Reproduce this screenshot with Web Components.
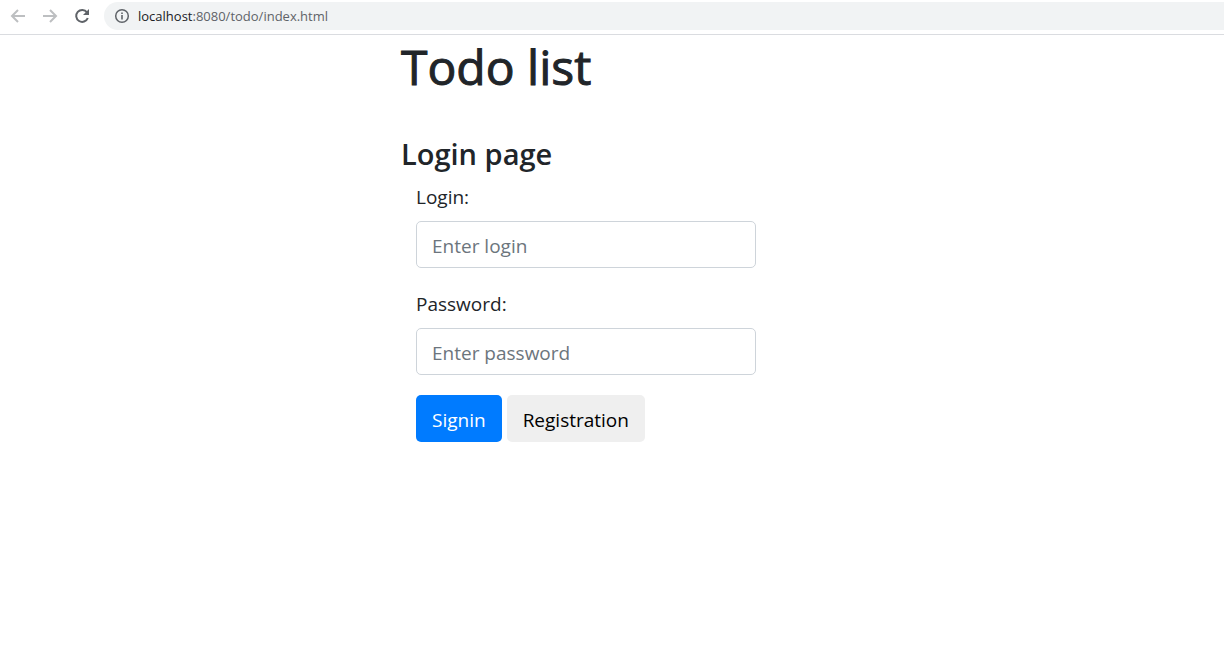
<!DOCTYPE html>
<html lang="en">
<head>
<meta charset="utf-8">
<meta name="viewport" content="width=device-width, initial-scale=1">
<title>Todo list</title>
<style>
  body { margin: 0; background: #fff; color: #212529; font: 400 19px/30px "Segoe UI", "Open Sans", "Noto Sans", sans-serif; }
</style>
</head>
<body>
<browser-bar host="localhost" path=":8080/todo/index.html"></browser-bar>
<todo-page heading="Todo list">
  <login-form heading="Login page">
    <text-field label="Login:" name="login" type="text" placeholder="Enter login"></text-field>
    <text-field label="Password:" name="password" type="password" placeholder="Enter password"></text-field>
    <push-button slot="actions" variant="primary">Signin</push-button>
    <push-button slot="actions">Registration</push-button>
  </login-form>
</todo-page>
<script>
class BaseElement extends HTMLElement {
  constructor() {
    super();
    this.attachShadow({ mode: 'open' });
  }
  connectedCallback() {
    this.shadowRoot.innerHTML = this.render();
  }
  attr(name) {
    return this.getAttribute(name) || '';
  }
}

customElements.define('browser-bar', class extends BaseElement {
  render() {
    return `
      <style>
        :host { display: flex; align-items: center; height: 32px; padding: 0 0 2px 8px; border-bottom: 1px solid #dadce0; background: #fff; }
        button { display: flex; width: 20px; height: 20px; margin-right: 12px; padding: 0; border: 0; background: none; color: #5f6368; }
        button:disabled { color: #bdbfc1; }
        svg { display: block; fill: none; stroke: currentColor; stroke-width: 2; }
        .address { flex: 1; display: flex; align-items: center; gap: 8px; height: 28px; padding-left: 10px; border-radius: 14px 0 0 14px; background: #f1f3f4; color: #5f6368; font-size: 13px; line-height: 20px; }
        .address svg { width: 16px; height: 16px; }
        .host { color: #202124; }
      </style>
      <button disabled aria-label="Back"><svg width="20" height="20" viewBox="0 0 20 20"><path d="M17 10H4.5M10 4L4 10L10 16"/></svg></button>
      <button disabled aria-label="Forward"><svg width="20" height="20" viewBox="0 0 20 20"><path d="M3 10H15.500M10 4L16 10L10 16"/></svg></button>
      <button aria-label="Reload"><svg width="20" height="20" viewBox="0 0 20 20"><path d="M15 6.300A6 6 0 1 0 15.800 12"/><path fill="currentColor" stroke="none" d="M17 3V9H11Z"/></svg></button>
      <div class="address">
        <svg viewBox="0 0 16 16" aria-hidden="true"><circle cx="8" cy="8" r="6.300" stroke-width="1.500"/><path stroke-width="1.600" d="M8 7V11.500M8 4.400V6"/></svg>
        <span><span class="host">${this.attr('host')}</span>${this.attr('path')}</span>
      </div>`;
  }
});

customElements.define('todo-page', class extends BaseElement {
  render() {
    return `
      <style>
        :host { display: grid; grid-template-columns: 401fr 370fr 453fr; }
        main { grid-column: 2; min-width: 0; }
        h1 { margin: 0 0 36px; font-size: 48px; line-height: 64px; font-weight: 500; white-space: nowrap; -webkit-text-stroke: 1px currentColor; }
      </style>
      <main><h1>${this.attr('heading')}</h1><slot></slot></main>`;
  }
});

customElements.define('login-form', class extends BaseElement {
  render() {
    return `
      <style>
        :host { display: block; }
        h2 { margin: 0 0 8px; font-size: 29px; line-height: 38px; font-weight: 600; }
        form { display: flex; flex-direction: column; gap: 20px; padding: 0 15px; }
        .actions { display: flex; gap: 5px; }
      </style>
      <h2>${this.attr('heading')}</h2>
      <form>
        <slot></slot>
        <div class="actions"><slot name="actions"></slot></div>
      </form>`;
  }
});

customElements.define('text-field', class extends BaseElement {
  render() {
    const name = this.attr('name');
    return `
      <style>
        :host { display: block; }
        label { display: block; margin-bottom: 8px; line-height: 32px; }
        input { display: block; box-sizing: border-box; width: 100%; height: 47px; margin: 0; padding: 9px 15px 7px; border: 1px solid #ced4da; border-radius: 5px; background: #fff; color: #495057; font: inherit; outline: 0; }
        input:focus { border-color: #80bdff; }
        input::placeholder { color: #6c757d; opacity: 1; }
      </style>
      <label for="${name}">${this.attr('label')}</label>
      <input id="${name}" name="${name}" type="${this.attr('type')}" placeholder="${this.attr('placeholder')}">`;
  }
});

customElements.define('push-button', class extends BaseElement {
  render() {
    return `
      <style>
        :host { display: block; }
        button { display: block; height: 47px; margin: 0; padding: 9px 16px 7px; border: 0; border-radius: 5px; background: #efefef; color: #000; font: inherit; cursor: pointer; }
        :host([variant="primary"]) button { background: #007bff; color: #fff; }
      </style>
      <button type="button"><slot></slot></button>`;
  }
});
</script>
</body>
</html>
